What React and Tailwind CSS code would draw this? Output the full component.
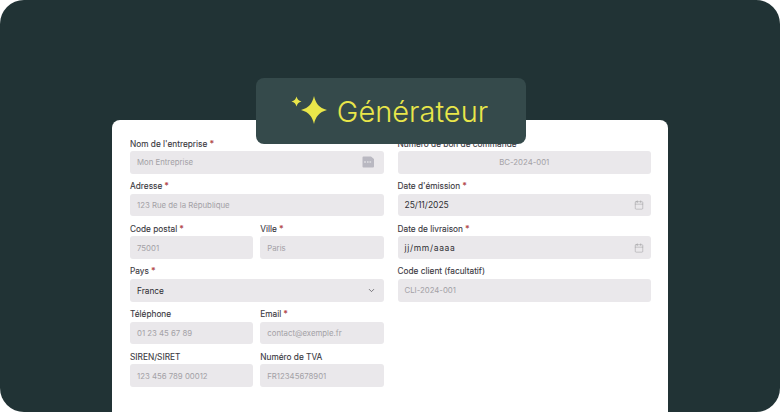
import React from "react";
import { Calendar, ChevronDown } from "lucide-react";

function Label({ text, req }) {
  return (
    <div className="h-[12px] mb-[2px] pt-[0.500px] text-[8.300px] leading-[12px] text-[#3b3a3f] whitespace-nowrap [-webkit-text-stroke:0.1px_#3b3a3f]">
      {text}
      {req && <span className="text-[#ef4444]"> *</span>}
    </div>
  );
}

function Field({ label, req, value, dark, center, right, className = "", textClass = "text-[7.800px] pt-[1.500px]" }) {
  return (
    <div className={"min-w-0 " + className}>
      <Label text={label} req={req} />
      <div
        className={
          "h-[22.67px] rounded-[3px] bg-[#eae8eb] px-[7px] flex items-center justify-between " +
          (dark ? "text-[#2f2e33]" : "text-[#a3a1a6]")
        }
      >
        <span className={textClass + (center ? " flex-1 text-center" : "")}>{value}</span>
        {right}
      </div>
    </div>
  );
}

function Row({ children }) {
  return <div className="grid grid-cols-2 gap-[7px]">{children}</div>;
}

function Manager() {
  return (
    <svg width="12" height="12" viewBox="0 0 12 12" className="mr-[2.500px]">
      <path d="M1.500 0.500H9L12 3V10.500a1 1 0 0 1-1 1H1.500a1 1 0 0 1-1-1V1.500a1 1 0 0 1 1-1Z" fill="#b9b8c1" />
      <circle cx="3" cy="6" r="0.8" fill="#f2f1f4" />
      <rect x="5" y="5.500" width="1.600" height="1" fill="#f2f1f4" />
      <rect x="7.500" y="5.500" width="1.600" height="1" fill="#f2f1f4" />
    </svg>
  );
}

const cal = <Calendar size={10} strokeWidth={1.2} className="text-[#99989d]" />;

export default function App() {
  return (
    <div className="w-[780px] h-[412px] bg-white font-['Inter',sans-serif]">
      <div className="h-full rounded-[24px] bg-[#213335] overflow-hidden flex flex-col items-center pt-[78px]">
        <div className="relative z-10 ml-[2px] w-[270px] h-[66px] shrink-0 rounded-[8px] bg-[#354a4b] flex items-center justify-center gap-[9px] pr-[4px] text-[#e9e64a]">
          <svg width="38" height="30" viewBox="0 0 38 30" className="-mt-[1px]">
            <path d="M24 0C25.500 7 29 12 37 14C29 16 25.500 21 24 28C22.500 21 19 16 11 14C19 12 22.500 7 24 0Z" fill="#e9e64a" />
            <path d="M6.500 0.500C7.200 3.300 8.500 4.800 11.500 5.500C8.500 6.200 7.200 7.700 6.500 10.500C5.800 7.700 4.500 6.200 1.500 5.500C4.500 4.800 5.800 3.300 6.500 0.500Z" fill="#e9e64a" />
          </svg>
          <span className="text-[29px] leading-none font-light">Générateur</span>
        </div>
        <div className="w-[556px] flex-1 -mt-[24px] rounded-t-[8px] bg-white pt-[17px] pl-[18px] pr-[17px] grid grid-cols-2 gap-[14px] content-start">
          <div className="min-w-0 flex flex-col gap-[6px]">
            <Field label="Nom de l'entreprise" req value="Mon Entreprise" right={<Manager />} />
            <Field label="Adresse" req value="123 Rue de la République" />
            <Row>
              <Field label="Code postal" req value="75001" />
              <Field label="Ville" req value="Paris" />
            </Row>
            <Field label="Pays" req value="France" dark textClass="text-[8.300px] pt-[1px]" right={<ChevronDown size={9} className="text-[#55545a] mr-[1px]" />} />
            <Row>
              <Field label="Téléphone" value="01 23 45 67 89" />
              <Field label="Email" req value="contact@exemple.fr" />
            </Row>
            <Row>
              <Field label="SIREN/SIRET" value="123 456 789 00012" />
              <Field label="Numéro de TVA" value="FR12345678901" />
            </Row>
          </div>
          <div className="min-w-0 flex flex-col gap-[6px]">
            <Field label="Numéro de bon de commande" value="BC-2024-001" center />
            <Field label="Date d'émission" req value="25/11/2025" dark textClass="text-[8.500px] pt-[1px]" right={cal} />
            <Field label="Date de livraison" req value="jj/mm/aaaa" dark textClass="text-[8.500px] tracking-[0.08em] pt-[1px]" right={cal} />
            <Field label="Code client (facultatif)" value="CLI-2024-001" />
          </div>
        </div>
      </div>
    </div>
  );
}
